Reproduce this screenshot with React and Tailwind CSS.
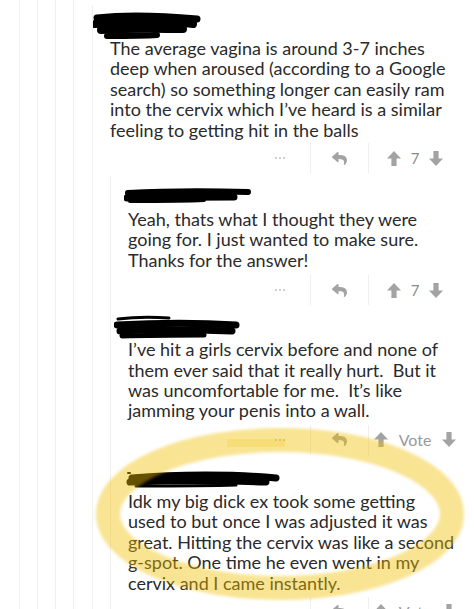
import React from "react";
import { FaReply } from "react-icons/fa";

const font = { fontFamily: "Lato, 'Open Sans', sans-serif" };

function Up() {
  return (
    <svg width="14" height="15" viewBox="0 0 14 15" className="block">
      <path d="M7 0 L14 7.5 L9.6 7.5 L9.6 15 L4.4 15 L4.4 7.5 L0 7.5 Z" fill="#a3a3a3" />
    </svg>
  );
}
function Down() {
  return (
    <svg width="14" height="15" viewBox="0 0 14 15" className="block">
      <path d="M7 15 L14 7.5 L9.6 7.5 L9.6 0 L4.4 0 L4.4 7.5 L0 7.5 Z" fill="#a3a3a3" />
    </svg>
  );
}

function Actions({ score, className = "" }) {
  return (
    <div className={"flex justify-end h-[30px] " + className}>
      <div className="w-[60px] flex items-center justify-center gap-[2px]">
        <span className="w-[2px] h-[2px] rounded-full bg-[#bdbdbd]" />
        <span className="w-[2px] h-[2px] rounded-full bg-[#bdbdbd]" />
        <span className="w-[2px] h-[2px] rounded-full bg-[#bdbdbd]" />
      </div>
      <div className="w-[58px] border-l border-[#efefef] flex items-center justify-center">
        <FaReply className="text-[#a3a3a3]" size={15} />
      </div>
      <div className="w-[93px] border-l border-[#efefef] flex items-center justify-center gap-[10px]">
        <Up />
        <span className={score === "Vote" ? "text-[16px] text-[#9a9a9a] mx-[1px]" : "text-[15px] text-[#8a8a8a]"}>{score}</span>
        <Down />
      </div>
    </div>
  );
}

function Text({ lines }) {
  return (
    <div className="text-[18px] leading-[20.4px] text-[#2a2a2a]">
      {lines.map((l, i) => (
        <div key={i} className="whitespace-pre">{l}</div>
      ))}
    </div>
  );
}

function Blob({ children, top, left, w, h }) {
  return (
    <svg
      className="absolute"
      style={{ top, left }}
      width={w}
      height={h}
      viewBox={`0 0 ${w} ${h}`}
    >
      {children}
    </svg>
  );
}

export default function App() {
  return (
    <div className="relative w-[474px] h-[609px] overflow-hidden bg-white" style={font}>
      <div className="flex h-full pl-[19px] pr-[13px]">
        <div className="flex-1 border-l border-[#efefef] pl-[17px] flex">
          <div className="flex-1 border-l border-[#efefef] pl-[17px] flex">
            <div className="flex-1 border-l border-[#efefef] pl-[17px] flex">
              <div className="flex-1 border-l border-[#efefef] pl-[18px] flex">
                <div className="flex-1 mt-[5px] border-l border-[#efefef] pl-[17px]">
                  {/* Comment 1 */}
                  <div className="relative h-[33px]">
                    <Blob top={7} left={-17} w={110} h={30}>
                      <g stroke="#000" strokeLinecap="round" fill="none">
                        <path d="M4 6 C30 3 70 4 104 7" strokeWidth="7" />
                        <path d="M2 12 C40 9 80 10 100 12" strokeWidth="8" />
                        <path d="M8 18 C40 16 70 17 90 17" strokeWidth="8" />
                        <path d="M14 24 C30 24 50 24 64 23" strokeWidth="6" />
                      </g>
                    </Blob>
                  </div>
                  <Text
                    lines={[
                      "The average vagina is around 3-7 inches",
                      "deep when aroused (according to a Google",
                      "search) so something longer can easily ram",
                      "into the cervix which I\u2019ve heard is a similar",
                      "feeling to getting hit in the balls",
                    ]}
                  />
                  <Actions score="7" className="mt-[3px]" />

                  <div className="mt-[3px] border-l border-[#efefef] pl-[17px]">
                    {/* Comment 2 */}
                    <div className="relative h-[33px]">
                      <Blob top={10} left={-4} w={130} h={20}>
                        <g stroke="#000" strokeLinecap="round" fill="none">
                          <path d="M4 7 C40 5 90 5 124 6" strokeWidth="6" />
                          <path d="M3 12 C40 11 80 11 110 11" strokeWidth="7" />
                          <path d="M6 15 C30 15 60 15 80 14" strokeWidth="4" />
                        </g>
                      </Blob>
                    </div>
                    <Text
                      lines={[
                        "Yeah, thats what I thought they were",
                        "going for. I just wanted to make sure.",
                        "Thanks for the answer!",
                      ]}
                    />
                    <Actions score="7" className="mt-[5px]" />

                    {/* Comment 3 */}
                    <div className="relative h-[34px]">
                      <Blob top={10} left={-14} w={130} h={28}>
                        <g stroke="#000" strokeLinecap="round" fill="none">
                          <path d="M4 4 C20 2 40 2 55 3" strokeWidth="3" />
                          <path d="M3 10 C40 8 90 8 122 10" strokeWidth="7" />
                          <path d="M6 16 C40 14 90 15 118 16" strokeWidth="7" />
                          <path d="M8 21 C40 20 70 20 90 20" strokeWidth="5" />
                        </g>
                      </Blob>
                    </div>
                    <Text
                      lines={[
                        "I\u2019ve hit a girls cervix before and none of",
                        "them ever said that it really hurt.  But it",
                        "was uncomfortable for me.  It\u2019s like",
                        "jamming your penis into a wall.",
                      ]}
                    />
                    <Actions score="Vote" className="mt-[4px]" />

                    {/* Comment 4 */}
                    <div className="relative h-[36px]">
                      <Blob top={14} left={-2} w={160} h={22}>
                        <g stroke="#000" strokeLinecap="round" fill="none">
                          <path d="M2 4 L4 4" strokeWidth="2" />
                          <path d="M6 9 C50 5 110 5 150 9" strokeWidth="7" />
                          <path d="M4 13 C50 11 110 12 140 13" strokeWidth="7" />
                          <path d="M10 17 C40 17 80 17 110 16" strokeWidth="3" />
                        </g>
                      </Blob>
                    </div>
                    <Text
                      lines={[
                        "Idk my big dick ex took some getting",
                        "used to but once I was adjusted it was",
                        "great. Hitting the cervix was like a second",
                        "g-spot. One time he even went in my",
                        "cervix and I came instantly.",
                      ]}
                    />
                    <Actions score="Vote" className="mt-[4px]" />
                  </div>
                </div>
              </div>
            </div>
          </div>
        </div>
      </div>

      {/* highlighter circle */}
      <svg
        className="absolute inset-0 pointer-events-none"
        width="474"
        height="609"
        viewBox="0 0 474 609"
      >
        <defs>
          <filter id="soft" x="-10%" y="-10%" width="120%" height="120%">
            <feGaussianBlur stdDeviation="1.4" />
          </filter>
        </defs>
        <g filter="url(#soft)" opacity="0.42" fill="none" stroke="#f0c000" strokeLinecap="round">
          <ellipse cx="280" cy="514" rx="172" ry="74" strokeWidth="24" />
        </g>
        <g filter="url(#soft)" opacity="0.18" fill="none" stroke="#f0c000" strokeLinecap="round">
          <path d="M232 446 C245 442 262 440 280 440" strokeWidth="22" />
        </g>
      </svg>
    </div>
  );
}
